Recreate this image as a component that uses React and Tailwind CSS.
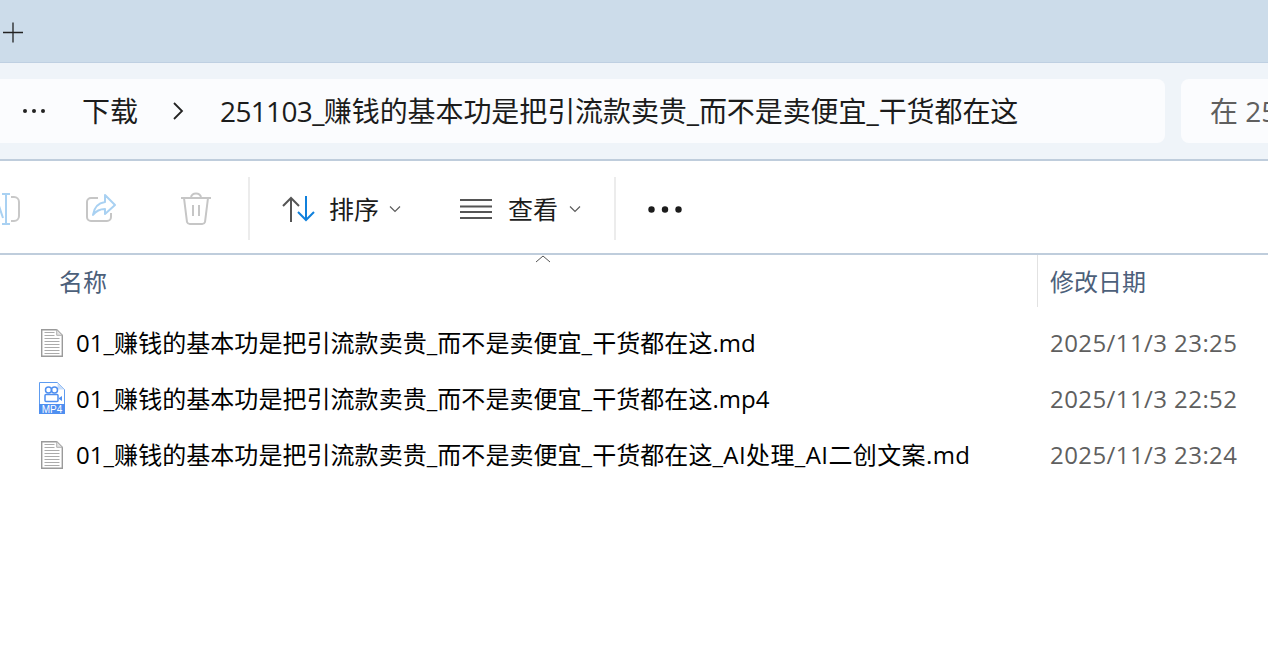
const FONT = "font-['Open_Sans','Noto_Sans_CJK_SC',sans-serif]";

const Chevron = () => (
  <svg width="12" height="8" viewBox="0 0 12 8" fill="none" stroke="#5c5c5c" strokeWidth="1.2"><path d="M1 1.5l5 5 5-5" /></svg>
);

const Divider = () => <div className="mb-[1px] h-[63px] w-[2px] shrink-0 bg-[#ececec]" />;

const DocIcon = () => (
  <svg width="22" height="28" viewBox="0 0 22 28" className="ml-[3px] shrink-0">
    <path d="M.7.7h15l5.6 5.6v21H.7z" fill="#fff" stroke="#9a9a9a" strokeWidth="1.4" />
    <path d="M15.7.7v5.6h5.6z" fill="#e4e4e4" stroke="#b0b0b0" strokeWidth="1" />
    <path d="M3.5 3.5h10M3.5 6.5h10M3.5 9.5h15M3.5 12.5h15M3.5 15.5h15M3.5 18.5h15M3.5 21.5h15M3.5 24.5h15" stroke="#ababab" strokeWidth="1" />
  </svg>
);

const VideoIcon = () => (
  <svg width="26" height="32" viewBox="0 0 26 32" className="mb-[2px] ml-[1px] shrink-0">
    <path d="M.5.5h18l7 7v24H.5z" fill="#fff" stroke="#5e9cf0" strokeWidth="1" />
    <path d="M18.5.5v7h7z" fill="#c9def9" />
    <rect x="0" y="22" width="26" height="10" fill="#4f8ff0" />
    <circle cx="9.5" cy="8" r="3" fill="none" stroke="#4f8ff0" strokeWidth="1.5" />
    <circle cx="15.5" cy="8" r="3" fill="none" stroke="#4f8ff0" strokeWidth="1.5" />
    <rect x="6" y="12.5" width="13" height="7" rx="1" fill="none" stroke="#4f8ff0" strokeWidth="1.5" />
    <path d="M20 16l3-2v5l-3-2z" fill="#4f8ff0" />
    <text x="13" y="31" textAnchor="middle" fontSize="10" fontFamily="Liberation Sans" fill="#fff">MP4</text>
  </svg>
);

const rows = [
  { name: '01_赚钱的基本功是把引流款卖贵_而不是卖便宜_干货都在这.md', tail: '', date: '2025/11/3 23:25', Icon: DocIcon },
  { name: '01_赚钱的基本功是把引流款卖贵_而不是卖便宜_干货都在这.mp4', tail: '', date: '2025/11/3 22:52', Icon: VideoIcon },
  { name: '01_赚钱的基本功是把引流款卖贵_而不是卖便宜_干货都在这', tail: '_AI处理_AI二创文案.md', date: '2025/11/3 23:24', Icon: DocIcon },
];

export default function App() {
  return (
    <div className={`flex h-[657px] w-[1268px] flex-col overflow-hidden bg-white ${FONT}`}>
      {/* title bar */}
      <div className="flex h-[63px] shrink-0 items-center border-b border-[#bfd0e2] bg-[#ccdcea] pt-[2px] pl-[3px]">
        <svg width="21" height="21" viewBox="0 0 21 21" stroke="#222" strokeWidth="1.3"><path d="M0 10.5h20M10 0.5v20" /></svg>
      </div>

      {/* address bar */}
      <div className="flex h-[98px] shrink-0 items-center gap-4 border-b-2 border-[#bfcddc] bg-[#eff4f9]">
        <div className="flex h-[64px] w-[1165px] shrink-0 items-center rounded-r-lg bg-[#fbfcfe] pl-[22px] text-[28px] text-[#1c1c1c]">
          <svg width="24" height="6" viewBox="0 0 24 6" fill="#222"><circle cx="3" cy="3" r="2" /><circle cx="12" cy="3" r="2" /><circle cx="21" cy="3" r="2" /></svg>
          <span className="ml-[36px] whitespace-nowrap">下载</span>
          <svg className="ml-[34px]" width="12" height="18" viewBox="0 0 12 18" fill="none" stroke="#222" strokeWidth="1.8"><path d="M2 1l8 8-8 8" /></svg>
          <span className="ml-[36px] whitespace-nowrap tracking-[-0.08px]">
            <span className="tracking-[-0.65px]">251103_</span>赚钱的基本功是把引流款卖贵_而不是卖便宜_干货都在这
          </span>
        </div>
        <div className="flex h-[64px] flex-1 items-center overflow-hidden rounded-l-lg bg-[#fbfcfe] pl-[29px] text-[28px] whitespace-nowrap text-[#5f5f5f]">在 25</div>
      </div>

      {/* toolbar */}
      <div className="flex h-[94px] shrink-0 items-center border-b-2 border-[#bfcddc] pt-[4px] pr-4">
        <div className="flex w-[248px] shrink-0 items-center">
          <svg className="ml-[-3px]" width="24" height="32" viewBox="0 0 24 32" fill="none">
            <path d="M14 4h3a5 5 0 0 1 5 5v14a5 5 0 0 1-5 5h-3" stroke="#c8c8c8" strokeWidth="2" />
            <path d="M5 1h8M9 1v30M5 31h8" stroke="#a9d1f2" strokeWidth="2" />
            <path d="M-4 25l5-15 5 15" stroke="#a9d1f2" strokeWidth="2" />
          </svg>
          <svg className="ml-[64px]" width="32" height="32" viewBox="0 0 32 32" fill="none">
            <path d="M13 5H6a4 4 0 0 0-4 4v15a4 4 0 0 0 4 4h16a4 4 0 0 0 4-4v-4" stroke="#c6c6c6" strokeWidth="2" />
            <path d="M20 2l10 10-10 9v-5c-6 0-9 2-12 6 1-7 5-12 12-13z" stroke="#a9d1f2" strokeWidth="2" strokeLinejoin="round" />
          </svg>
          <svg className="ml-[64px]" width="30" height="34" viewBox="0 0 30 34" fill="none" stroke="#c6c6c6" strokeWidth="2">
            <path d="M0 6h30M10 6c0-6 10-6 10 0M3 6l3 24a3 3 0 0 0 3 2h12a3 3 0 0 0 3-2l3-24M12 13v11M18 13v11" />
          </svg>
        </div>
        <Divider />
        <div className="ml-[32px] flex items-center">
          <svg width="33" height="26" viewBox="0 0 33 26" fill="none" strokeWidth="2">
            <path d="M1 10l8-8 8 8M9 2v24" stroke="#555" />
            <path d="M16 16l8 8 8-8M24 24V0" stroke="#1080dc" />
          </svg>
          <span className="ml-[14px] pt-[2px] text-[25px] text-[#1c1c1c]">排序</span>
          <span className="ml-[10px]"><Chevron /></span>
        </div>
        <div className="ml-[59px] flex items-center">
          <svg width="32" height="20" viewBox="0 0 32 20" stroke="#555" strokeWidth="2"><path d="M0 1h32M0 7.5h32M0 13h32M0 19h32" /></svg>
          <span className="ml-[16px] pt-[2px] text-[25px] text-[#1c1c1c]">查看</span>
          <span className="ml-[11px]"><Chevron /></span>
        </div>
        <div className="ml-[33px]"><Divider /></div>
        <svg className="ml-[32px]" width="34" height="7" viewBox="0 0 34 7" fill="#1c1c1c"><circle cx="3.5" cy="3.5" r="3.2" /><circle cx="17" cy="3.5" r="3.2" /><circle cx="30.5" cy="3.5" r="3.2" /></svg>
      </div>

      {/* column headers */}
      <div className="relative flex h-[52px] shrink-0 items-center text-[24px] text-[#4c607a]">
        <svg className="absolute top-[0px] left-[535px]" width="16" height="8" viewBox="0 0 16 8" fill="none" stroke="#555"><path d="M1 7l7-6 7 6" /></svg>
        <span className="w-[1037px] pt-[1px] pl-[59px]">名称</span>
        <div className="flex h-full items-center border-l border-[#e2e2e2] pt-[1px] pl-[12px]">修改日期</div>
      </div>

      {/* files */}
      <div className="mt-[8px] flex flex-col">
        {rows.map(({ name, tail, date, Icon }) => (
          <div key={date} className="flex h-[56px] items-center text-[24px]">
            <div className="w-[38px] shrink-0" />
            <div className="flex w-[38px] shrink-0 items-center"><Icon /></div>
            <span className="w-[974px] shrink-0 whitespace-nowrap tracking-[0.05px] text-black">
              {name}<span className="tracking-[0.4px]">{tail}</span>
            </span>
            <span className="whitespace-nowrap tracking-[0.42px] text-[#5f5f5f]">{date}</span>
          </div>
        ))}
      </div>
    </div>
  );
}
